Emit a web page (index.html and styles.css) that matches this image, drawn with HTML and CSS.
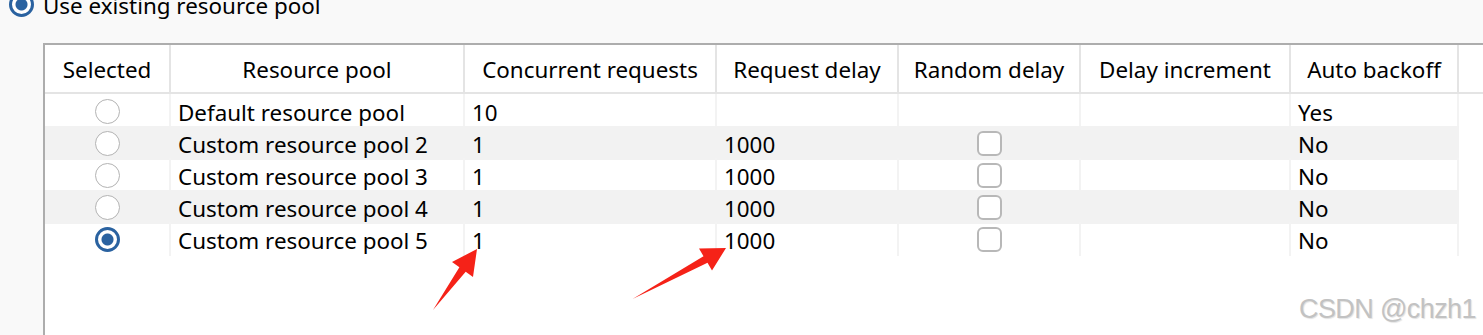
FILE: index.html
```html
<!DOCTYPE html>
<html>
<head>
<meta charset="utf-8">
<link rel="stylesheet" href="styles.css">
</head>
<body>
<div class="page">
  <div class="option">
    <span class="radio radio-on"></span>
    <span class="option-label">Use existing resource pool</span>
  </div>
  <div class="table">
    <div class="row head">
      <div class="hcell">Selected</div>
      <div class="hcell">Resource pool</div>
      <div class="hcell">Concurrent requests</div>
      <div class="hcell">Request delay</div>
      <div class="hcell">Random delay</div>
      <div class="hcell">Delay increment</div>
      <div class="hcell">Auto backoff</div>
      <div class="hcell filler"></div>
    </div>
    <div class="row">
      <div class="cell center"><span class="radio"></span></div>
      <div class="cell">Default resource pool</div>
      <div class="cell">10</div>
      <div class="cell"></div>
      <div class="cell center"></div>
      <div class="cell"></div>
      <div class="cell">Yes</div>
      <div class="cell filler"></div>
    </div>
    <div class="row alt">
      <div class="cell center"><span class="radio"></span></div>
      <div class="cell">Custom resource pool 2</div>
      <div class="cell">1</div>
      <div class="cell">1000</div>
      <div class="cell center"><span class="check"></span></div>
      <div class="cell"></div>
      <div class="cell">No</div>
      <div class="cell filler"></div>
    </div>
    <div class="row">
      <div class="cell center"><span class="radio"></span></div>
      <div class="cell">Custom resource pool 3</div>
      <div class="cell">1</div>
      <div class="cell">1000</div>
      <div class="cell center"><span class="check"></span></div>
      <div class="cell"></div>
      <div class="cell">No</div>
      <div class="cell filler"></div>
    </div>
    <div class="row alt">
      <div class="cell center"><span class="radio"></span></div>
      <div class="cell">Custom resource pool 4</div>
      <div class="cell">1</div>
      <div class="cell">1000</div>
      <div class="cell center"><span class="check"></span></div>
      <div class="cell"></div>
      <div class="cell">No</div>
      <div class="cell filler"></div>
    </div>
    <div class="row">
      <div class="cell center"><span class="radio radio-on"></span></div>
      <div class="cell">Custom resource pool 5</div>
      <div class="cell">1</div>
      <div class="cell">1000</div>
      <div class="cell center"><span class="check"></span></div>
      <div class="cell"></div>
      <div class="cell">No</div>
      <div class="cell filler"></div>
    </div>
  </div>
  <svg class="arrows" width="1483" height="335" viewBox="0 0 1483 335">
    <polygon points="433,310 459.4,267.3 452,262 477,249 473,277 465.7,271.8" fill="#f52218"/>
    <polygon points="632.5,299 703.5,256.2 699,248.5 726,248 712,270.5 707.5,262.8" fill="#f52218"/>
  </svg>
  <div class="watermark">CSDN @chzh1</div>
</div>
</body>
</html>
```
FILE: styles.css
```css
html, body {
  margin: 0;
  padding: 0;
}
body {
  background: #f9f9f9;
  font-family: "Noto Sans", "Open Sans", sans-serif;
  font-size: 22.4px;
  color: #000;
  overflow: hidden;
}
.page {
  position: relative;
  width: 1483px;
  height: 335px;
  overflow: hidden;
}
.option {
  display: flex;
  align-items: center;
  height: 32px;
  margin-top: -12px;
  padding-left: 9px;
  gap: 9px;
  line-height: 32px;
}
.option-label {
  position: relative;
  top: 2px;
}
.radio {
  display: inline-block;
  box-sizing: border-box;
  width: 25px;
  height: 25px;
  border-radius: 50%;
  border: 1.5px solid #b3b3b3;
  background: #fff;
  flex: none;
}
.radio-on {
  border: 3px solid #2a62a0;
  background: radial-gradient(circle, #2a62a0 0 5.5px, #fff 6.5px);
}
.table {
  margin-top: 23px;
  margin-left: 43px;
  border-top: 2px solid #adadad;
  border-left: 2px solid #adadad;
  background: #fff;
  height: 300px;
}
.row {
  display: grid;
  grid-template-columns: 126px 294px 252px 182px 182px 210px 168px 1fr;
  height: 32px;
}
.row.head {
  height: 49px;
}
.hcell {
  box-sizing: border-box;
  display: flex;
  align-items: center;
  justify-content: center;
  border-right: 2px solid #e4e4e4;
  border-bottom: 2px solid #e4e4e4;
  white-space: nowrap;
  padding-top: 2px;
}
.hcell.filler {
  border-right: none;
}
.cell {
  box-sizing: border-box;
  display: flex;
  align-items: center;
  padding-left: 7px;
  padding-top: 3px;
  border-right: 2px solid #f3f3f3;
  white-space: nowrap;
}
.cell.center {
  justify-content: center;
  padding-left: 0;
  padding-top: 0;
}
.row.alt .cell {
  background: #f2f2f2;
  border-right-color: #f2f2f2;
}
.row .cell.filler,
.row.alt .cell.filler {
  background: #fff;
  border-right: none;
}
.check {
  display: inline-block;
  box-sizing: border-box;
  width: 25px;
  height: 25px;
  border: 2px solid #b8b8b8;
  border-radius: 6px;
  background: #fff;
}
.arrows {
  position: absolute;
  left: 0;
  top: 0;
  pointer-events: none;
}
.watermark {
  position: absolute;
  left: 1299px;
  top: 294px;
  font-family: "Liberation Sans", Arial, sans-serif;
  font-size: 27px;
  letter-spacing: -0.6px;
  color: #c2c2c2;
  text-shadow: 1px 1px 1px #e2e2e2;
  white-space: nowrap;
}
```
